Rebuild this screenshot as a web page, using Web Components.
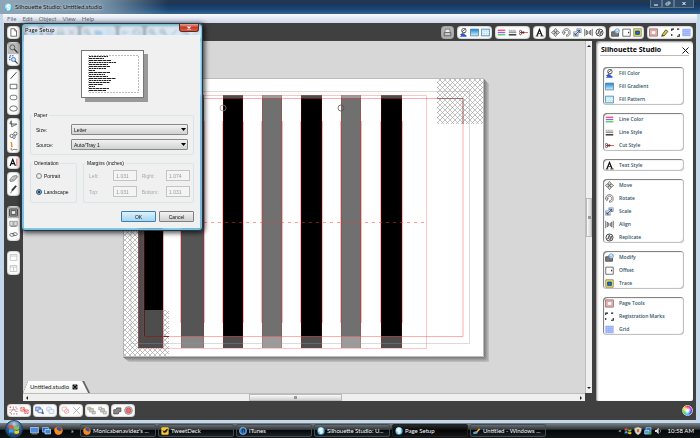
<!DOCTYPE html>
<html lang="en">
<head>
<meta charset="utf-8">
<title>Silhouette Studio: Untitled.studio</title>
<style>
body {
  margin: 0;
  min-height: 100vh;
  display: flex;
  flex-direction: column;
  font: 6px/8px Lato, "Open Sans", sans-serif;
  background: #000;
}
studio-window { flex: 1; }
</style>
</head>
<body>
<studio-window></studio-window>
<task-bar></task-bar>

<script>
const logo = '<circle cx="6" cy="6" r="5.5" fill="#4db4d8"/><circle cx="5.500" cy="4.500" r="4" fill="#b5e5f4"/><path d="M8 3C4 2 3 5 6 6s2 4-2 3" fill="none" stroke="#fff" stroke-width="1.800"/>';
const firefox = '<circle cx="6" cy="6" r="5.500" fill="#ee6a12"/><circle cx="6.500" cy="4.500" r="3.200" fill="#2d57a8"/><path d="M1 3c2-1 3 1 3 2 2 0 2 2 4 2s3-1 3-3c1 4-1 7-5 7.500S0 8 1 3z" fill="#f58b1d"/>';

const icons = {
  logo,
  firefox,
  page: '<path d="M2.500 1h5l2.500 3v7H2.500z" fill="#fff" stroke="#444"/><path d="M7.500 1v3H10" fill="none" stroke="#444" stroke-width=".7"/>',
  zoom: '<circle cx="4.500" cy="4.500" r="3.300" fill="#bbb" stroke="#444"/><path d="M7 7l4.500 4.500" stroke="#333" stroke-width="1.600"/>',
  zoomsel: '<path d="M1 7V1h6" fill="none" stroke="#35c" stroke-width="1.600" stroke-dasharray="2 1"/><circle cx="6" cy="6" r="2.800" fill="#cde" stroke="#26b"/><path d="M8 8l3.500 3.500" stroke="#444" stroke-width="1.500"/>',
  line: '<path d="M2 10.500L10 1.500" stroke="#333" stroke-width="1.200"/>',
  rect: '<path d="M1.500 3h9v6h-9z" fill="#fff" stroke="#444"/>',
  round: '<rect x="1.500" y="3" width="9" height="6" rx="2.500" fill="#fff" stroke="#555"/>',
  oval: '<ellipse cx="6" cy="6" rx="5" ry="3.500" fill="#fff" stroke="#444"/>',
  polygon: '<path d="M3 1l.5 8 7-3.500L1 5z" fill="#ddd" stroke="#444"/>',
  curve: '<circle cx="8.500" cy="3.500" r="2.200" fill="none" stroke="#444"/><circle cx="3.500" cy="6.500" r="2.200" fill="none" stroke="#444"/><path d="M5 8c0 3 3 3 3 0V5" fill="none" stroke="#444"/>',
  pencil: '<path d="M3 0l1 7" stroke="#f28a1c" stroke-width="2"/><path d="M3 8c-1 4 2 3 3 2s3 1 5 0" fill="none" stroke="#444"/>',
  textcursor: '<path d="M1.500 10.500L5 2l3.500 8.500M3 7.500h4" fill="none" stroke="#111" stroke-width="1.700"/><path d="M10.500 1v10" stroke="#e33"/>',
  eraser: '<path d="M1 8l4-5 5-1 1 2-4 5-5 1z" fill="#ddd" stroke="#666"/><path d="M4 8l4-5M1 8h5l5-5" fill="none" stroke="#777" stroke-width=".7"/>',
  knife: '<path d="M9.500 1L4 7.500" stroke="#333" stroke-width="2.500"/><path d="M4.500 7L2 11" stroke="#444"/>',
  screen: '<rect x=".7" y="1.200" width="10.600" height="9.600" rx="1" fill="#999" stroke="#333"/><path d="M3 3.500h6v5H3z" fill="#eee" stroke="#333"/>',
  book: '<path d="M1 3h4.500v6H1zM6.500 3H11v6H6.500z" fill="#ddd" stroke="#888"/><path d="M2 10h8" stroke="#777"/>',
  link: '<ellipse cx="4" cy="6.500" rx="3" ry="2" fill="none" stroke="#555"/><ellipse cx="8" cy="5.500" rx="3" ry="2" fill="none" stroke="#555"/>',
  panel: '<path d="M1.500 2h9v8h-9zM1.500 4h9" fill="#fff" stroke="#bbb"/>',
  split: '<path d="M1.500 2h9v8h-9zM1.500 4h9M6 4v6" fill="#fff" stroke="#bbb"/>',
  printer: '<path d="M2.500 6L3 1.500h6l.5 4.500" fill="#eee" stroke="#666"/><path d="M1.500 6h9v4.500h-9z" fill="#aaa" stroke="#555"/><path d="M3 8h6" stroke="#fff"/>',
  save: '<path d="M1.500 1.500h9v9h-9z" fill="#5578b8" stroke="#335"/><path d="M3.500 2h5v3h-5z" fill="#fff"/>',
  folder: '<path d="M1 3h4l1 1h5v6H1z" fill="#4d93d6"/>',
  redcut: '<path d="M2 2l8 8M10 2l-8 8" stroke="#c66" stroke-width="1.500"/>',
  undo: '<path d="M2 6h8M5 3L2 6l3 3" fill="none" stroke="#57a" stroke-width="1.300"/>',
  fillcolor: '<circle cx="6.500" cy="3.500" r="3" fill="#fff" stroke="#333"/><path d="M4 5l5-4M8 6L3 8" stroke="#333"/><path d="M1 8h6l3 2v1.500H1l2-2z" fill="#2459dd"/>',
  gradient: '<defs><linearGradient id="g" x2="0" y2="1"><stop stop-color="#1686d0"/><stop offset="1" stop-color="#d8f1ff"/></linearGradient></defs><path d="M.5 1.500h11v9H.5z" fill="url(#g)" stroke="#47799a"/>',
  pattern: '<path d="M.5 1.500h11v9H.5z" fill="#b9e7fa" stroke="#47799a"/><path d="M2 4h9M3 6h8M2 8.500h9" stroke="#fff" stroke-width="1.400" stroke-dasharray="1.500 1.500"/>',
  linecolor: '<path d="M1 3h10" stroke="#f0506a" stroke-width="1.800"/><path d="M1 6h10" stroke="#9b5cf0" stroke-width="1.800"/><path d="M1 9h10" stroke="#45d060" stroke-width="1.800"/>',
  linestyle: '<path d="M1 3h10" stroke="#555" stroke-dasharray="1.500 1"/><path d="M1 5.500h10" stroke="#555" stroke-width="1.300"/><path d="M1 9h10" stroke="#444" stroke-width="2.200"/>',
  cutstyle: '<path d="M4 6h8" stroke="#d33"/><circle cx="2" cy="4.500" r="1.400" fill="none" stroke="#633"/><circle cx="2" cy="7.500" r="1.400" fill="none" stroke="#633"/><path d="M3 5l4 2M3 7l4-2" stroke="#622" stroke-width="1.500"/>',
  text: '<path d="M2.500 10.500L6 2l3.500 8.500" fill="none" stroke="#111" stroke-width="1.700"/><path d="M4 7.500h4M1 10.700h3.500M7 10.700h4.500" stroke="#111"/>',
  move: '<path d="M6 .5l2 2.500v1.500L6 6 4 4.500V3zM6 11.500L4 9V7.500L6 6l2 1.500V9zM.5 6L3 4h1.500L6 6 4.500 8H3zM11.500 6L9 8H7.500L6 6l1.500-2H9z" fill="#ddd" stroke="#555" stroke-width=".9"/>',
  rotate: '<path d="M1 6c0-7 10-7 10 0 0 4-3 5-5 5V9c5-1 3-6 0-6-2 0-3 1-3 3l1.500-.5L2.500 9 0 5.500z" fill="#eee" stroke="#555" stroke-width=".9"/>',
  scale: '<path d="M.8 11V5H5V1h6v5H7v5z" fill="#dbe6fb" stroke="#6381b9" stroke-width=".8"/><path d="M2.500 9.500L9 3M5.500 3H9v3.500M2.500 6.500v3H6" fill="none" stroke="#333"/>',
  align: '<path d="M1 1v10M11 1v10" stroke="#444"/><path d="M3 3l2 1.500v3L3 9zM9 3L7 4.500v3L9 9z" fill="#ddd" stroke="#444"/>',
  replicate: '<circle cx="6" cy="6" r="4.700" fill="none" stroke="#444" stroke-width="1.300"/><path d="M3.500 8L6 2.500 5 7zM6 9l2.500-5L8 8z" fill="#fff" stroke="#333"/>',
  modify: '<path d="M.8 5H4l1-1.500 2 2.500h3v5H.8z" fill="#777" stroke="#444"/><circle cx="8.300" cy="4" r="3" fill="#dcecfc" stroke="#5c93cf"/><path d="M7 4l1 1 2-2" fill="none" stroke="#5c93cf"/>',
  offset: '<path d="M1 1.500h10v9.500H1z" fill="#fff" stroke="#444"/><path d="M8 4.500v3L10 6z" fill="#333"/>',
  trace: '<path d="M1 1h10v10H1z" fill="#ede34d" stroke="#777"/><path d="M3.500 4h5v4.500h-5z" fill="#1570e0" stroke="#235"/>',
  pagetools: '<path d="M.8 1.200h10.400v9.600H.8z" fill="#f7b9b9" stroke="#666"/><path d="M3 3.500h6v5H3z" fill="#fff" stroke="#e66" stroke-width=".7"/>',
  marker: '<path d="M2.500 9.500l5-7 3 2-5 6z" fill="#e4cf28" stroke="#333"/><path d="M2.500 9.500l-1 2 4-1z" fill="#222"/>',
  regmarks: '<path d="M1 4V1.500h3M8 1.500h3M1 10.500V8M8 11h3V8" fill="none" stroke="#222" stroke-width="1.500"/>',
  grid: '<path d="M.5 1h11v10H.5z" fill="#90aaf5"/><path d="M3.500 1v10M6.500 1v10M9.500 1v10M.5 3.500h11M.5 6h11M.5 8.500h11" stroke="#c3d1ff" stroke-width=".6"/>',
  group: '<path d="M1.500 1.500h9v9h-9z" fill="none" stroke="#e46a6a" stroke-width="1.500" stroke-dasharray="1.500 2"/><path d="M3 8l3-5 3 5M3 5h6" fill="none" stroke="#999"/>',
  ungroup: '<path d="M1 2h5v5H1zM6 5h5v5H6z" fill="#fbb" stroke="#e46a6a" stroke-width="1.500" stroke-dasharray="1.500 1"/><path d="M4 4l5 4" stroke="#c44"/>',
  duplicate: '<path d="M1 1.500h6v5H1z" fill="#c5d9f5" stroke="#3b62b5"/><rect x="4" y="4" width="6" height="5" rx="1" fill="#e3eefc" stroke="#3b62b5"/><path d="M10.500 7v4M8.500 9.500h3.500" stroke="#246"/>',
  copy: '<rect x="1" y="1.500" width="6" height="5" rx="1" fill="#eef4fd" stroke="#a9bfdd"/><rect x="4" y="4.500" width="6.500" height="5.500" rx="1" fill="#eef4fd" stroke="#a9bfdd"/>',
  remove: '<rect x="1.500" y="1.500" width="6" height="5" rx="1" fill="none" stroke="#e99"/><circle cx="7.500" cy="7" r="3" fill="#fee" stroke="#e99"/><path d="M5.500 9l4-4" stroke="#e99"/>',
  cross: '<path d="M1.500 1.500l9 9M10.500 1.500l-9 9" stroke="#aaa" stroke-width="1.200"/>',
  forward: '<path d="M1 1.500h4v3.500H1zM7 7h4v3.500H7z" fill="#ddd" stroke="#999"/><path d="M3.500 3.500h5v4.500h-5z" fill="#cdd6a5" stroke="#999"/>',
  backward: '<path d="M3.500 3.500h5v4.500h-5z" fill="#cdd6a5" stroke="#999"/><path d="M1 1.500h4v3.500H1zM7 7h4v3.500H7z" fill="#ddd" stroke="#999"/>',
  weld: '<path d="M1 5h3l1-2.500h5.500v5H8l-1 3H1z" fill="#888" stroke="#444"/>',
  target: '<circle cx="6" cy="6" r="5.200" fill="#b9bcbc" stroke="#888"/><circle cx="6" cy="6" r="3" fill="#f66" stroke="#d44"/>',
  desktop: '<path d="M.5 2h11v7H.5z" fill="#4e8bdc" stroke="#b8d3ef"/><path d="M2 10.500h8" stroke="#bbb"/>',
  windows: '<path d="M.5 2h8v6h-8z" fill="#2a62bb" stroke="#a7c8f0"/><path d="M4 4.500h7.500v6H4z" fill="#3f85e0" stroke="#d4e5fa"/>',
  bird: '<rect x=".5" y=".5" width="11" height="11" rx="1.500" fill="#f7c52c"/><path d="M2 5l3 1 4-3.500 1.500 1L8 8l-3.500 1z" fill="#222"/>',
  itunes: '<circle cx="6" cy="6" r="5.300" fill="#2f77c9" stroke="#adc7e2"/><path d="M5 8.500V3.500l3-.5v5" fill="none" stroke="#122" stroke-width="1.200"/>',
  writer: '<path d="M2 10L9 2l2 1.500L5 10z" fill="#f1a82d"/><path d="M0 8l5-2 2 3-6 2z" fill="#57a7e6"/>',
  flag: '<path d="M1 3c2-2 3-1 4.500 0v3C4 5 2.500 5 1 6z" fill="#f0522b"/><path d="M6.300 3.300C8 4.500 9.500 4 11 3v3c-2 1.500-3.500 1-4.700.3z" fill="#87c540"/><path d="M1 7c2-1.500 3-1 4.500 0v3C4 9 2.500 9 1 10z" fill="#36a5e8"/><path d="M6.300 7.300C8 8.500 9.500 8 11 7v3c-2 1.500-3.500 1-4.700.3z" fill="#fbc617"/>',
  shield: '<path d="M1 2l5-1.500L11 2c0 5-1 8-5 9.500C2 10 1 7 1 2z" fill="#ddd" stroke="#aaa"/><path d="M4 3h4v5H4z" fill="#e08c28"/><path d="M6 4v3" stroke="#333"/>',
  network: '<path d="M3 1h7.500v6H3z" fill="#2c6dc2" stroke="#b2d4f4"/><path d="M1 5h6.500v5.500H1z" fill="#3fa0e0" stroke="#d5eafa"/><circle cx="9" cy="9" r="2.500" fill="#3aa553"/>',
  sound: '<path d="M1.500 4.500h2L7 1v10L3.500 7.500h-2z" fill="#ddd"/><path d="M8.500 3.500c2 1.500 2 3.500 0 5" fill="none" stroke="#bbb"/>'
};

class ToolIcon extends HTMLElement {
  connectedCallback() {
    if (this.shadowRoot) return;
    this.attachShadow({ mode: 'open' }).innerHTML = `
      <style>
        :host { display: block; flex: none; width: var(--icon-size, 9px); height: var(--icon-size, 9px); }
        svg { display: block; width: 100%; height: 100%; }
      </style>
      <svg viewBox="0 0 12 12" aria-hidden="true">${icons[this.getAttribute('name')] || ''}</svg>`;
  }
}

// Rounded white strip of tool buttons, built from a space separated list of icons
class ToolGroup extends HTMLElement {
  connectedCallback() {
    if (this.shadowRoot) return;
    const tools = this.getAttribute('tools').split(' ');
    this.attachShadow({ mode: 'open' }).innerHTML = `
      <style>
        :host {
          display: flex;
          flex: none;
          padding: 1px;
          border-radius: 4px;
          background: #fff;
          box-shadow: inset 0 0 2px #777;
        }
        :host([vertical]) { flex-direction: column; }
        :host([pressed]) { background: #b5b5b5; }
        button {
          display: grid;
          place-items: center;
          width: 11px;
          height: 11px;
          padding: 0;
          border: 0;
          border-radius: 2px;
          background: none;
        }
        button.on { background: #bbb; box-shadow: 0 0 1px #555; }
      </style>
      ${tools.map(t => `<button type="button" aria-label="${t}" class="${t === this.getAttribute('active') ? 'on' : ''}"><tool-icon name="${t}"></tool-icon></button>`).join('')}`;
  }
}

class ScrollTrack extends HTMLElement {
  connectedCallback() {
    if (this.shadowRoot) return;
    this.attachShadow({ mode: 'open' }).innerHTML = `
      <style>
        :host {
          display: flex;
          align-items: center;
          justify-content: space-between;
          box-sizing: border-box;
          background: #efefef;
          border: 0 solid #bdbdbd;
          border-top-width: 1px;
        }
        :host([vertical]) { flex-direction: column; border-width: 0 0 0 1px; }
        svg { width: 4px; height: 4px; margin: 2px; flex: none; }
        :host([vertical]) svg { margin: 3px 1px; }
        .thumb {
          display: grid;
          place-items: center;
          box-sizing: border-box;
          width: 93px;
          height: 7px;
          margin-right: 3%;
          border: 1px solid #bbb;
          background: linear-gradient(#fafafa, #d2d2d2);
        }
        :host([vertical]) .thumb { width: 6px; height: 39px; margin: 0; background: linear-gradient(90deg, #fafafa, #d2d2d2); }
        .grip { width: 3px; height: 3px; background: #999; }
      </style>
      <svg viewBox="0 0 4 4"><path d="${this.hasAttribute('vertical') ? 'M2 1l2 2H0z' : 'M1 2l2-2v4z'}" fill="#222"/></svg>
      <div class="thumb"><div class="grip"></div></div>
      <svg viewBox="0 0 4 4"><path d="${this.hasAttribute('vertical') ? 'M2 3l2-2H0z' : 'M3 2L1 0v4z'}" fill="#222"/></svg>`;
  }
}

// x, width, fill, fill past the cut border
const stripes = [
  [181, 23, '#555', '#888'],
  [223, 20, '#000', '#4d4d4d'],
  [262, 20, '#707070', '#9b9b9b'],
  [301, 21, '#000', '#4d4d4d'],
  [341, 20, '#707070', '#9b9b9b'],
  [381, 21, '#000', '#4d4d4d']
];

class CanvasStage extends HTMLElement {
  connectedCallback() {
    if (this.shadowRoot) return;
    const bars = stripes.map(([x, w, fill, edge]) => `
      <rect x="${x}" y="95" width="${w}" height="253" fill="${edge}"/>
      <rect x="${x}" y="98" width="${w}" height="238" fill="${fill}"/>
      <path d="M${x - .5} 121v202M${x + w + .5} 121v202" stroke="#f33" stroke-opacity=".35"/>
      <path d="M${x + .5} 95v253M${x + w - .5} 95v253" stroke="#f00" stroke-opacity=".2"/>`).join('');
    this.attachShadow({ mode: 'open' }).innerHTML = `
      <style>
        :host { display: grid; place-items: center; background: #d7d7d7; }
        .art { grid-area: 1 / 1; width: 372px; height: 292px; }
        .tab {
          display: flex;
          align-items: center;
          gap: 3px;
          height: 12px;
          padding: 0 10px 0 7px;
          color: #222;
          background: linear-gradient(#fff, #f0f0ee);
          clip-path: polygon(0 100%, 5px 0, calc(100% - 6px) 0, 100% 100%);
        }
        .shade {
          grid-area: 1 / 1;
          place-self: end start;
          display: flex;
          padding-right: 2px;
          background: #666;
          clip-path: polygon(0 100%, 5px 0, calc(100% - 6px) 0, 100% 100%);
        }
        button { display: block; padding: 0; border: 0; background: none; width: 6px; height: 6px; }
        button svg { display: block; }
      </style>
      <svg class="art" viewBox="118 71 372 292" role="img" aria-label="Striped design on a letter page">
        <defs>
          <pattern id="hatch" width="5" height="5" patternUnits="userSpaceOnUse">
            <path d="M0 0l5 5M5 0L0 5" stroke="#999" stroke-width=".6"/>
          </pattern>
          <linearGradient id="right"><stop stop-color="#777"/><stop offset="1" stop-color="#c4c4c4"/></linearGradient>
          <linearGradient id="down" x2="0" y2="1"><stop stop-color="#777"/><stop offset="1" stop-color="#c4c4c4"/></linearGradient>
        </defs>
        <path d="M484 79l5 5v278l-5-5z" fill="url(#right)"/>
        <path d="M123 357h361l5 5H129z" fill="url(#down)"/>
        <path d="M123.500 78.500h360v278h-360z" fill="#fff" stroke="#bbb"/>
        <path d="M123 79h15v231h31v46h-46zM437 79h46v45h-46z" fill="url(#hatch)"/>
        <rect x="138" y="95" width="25" height="253" fill="#4d4d4d"/>
        <rect x="144" y="98" width="19" height="212" fill="#000"/>
        <path d="M144.500 310v26.500H169" fill="none" stroke="#222"/>
        ${bars}
        <path d="M131 91.500h338.500v252H131z" fill="none" stroke="#999" stroke-opacity=".35"/>
        <path d="M138.500 95.500h288v253h-288z" fill="none" stroke="#f55" stroke-opacity=".35"/>
        <path d="M144 98.500h319v238H144z" fill="none" stroke="#f33" stroke-opacity=".4"/>
        <path d="M437 98.500h26V124" fill="none" stroke="#755" stroke-opacity=".7"/>
        <path d="M163.500 230v118" stroke="#f55" stroke-opacity=".5"/>
        <path d="M204 222.500h222" stroke="#f33" stroke-opacity=".5" stroke-dasharray="3 4"/>
        <circle cx="223" cy="108" r="3" fill="none" stroke="#888" stroke-opacity=".7"/>
        <circle cx="341" cy="108" r="3" fill="none" stroke="#555" stroke-opacity=".8"/>
      </svg>
      <div class="shade">
        <div class="tab">Untitled.studio
          <button type="button" aria-label="Close tab"><svg viewBox="0 0 6 6"><rect width="6" height="6" rx="2" fill="#999"/><path d="M1 1l4 4M5 1L1 5" stroke="#111" stroke-width="1.300"/></svg></button>
        </div>
      </div>`;
  }
}

class PanelGroup extends HTMLElement {
  connectedCallback() {
    if (this.shadowRoot) return;
    this.attachShadow({ mode: 'open' }).innerHTML = `
      <style>
        :host {
          display: flex;
          flex-direction: column;
          gap: 1px;
          border-radius: 4px;
          box-shadow: inset 1px 1px 1px #777, inset -1px -1px 1px #bbb;
        }
      </style>
      <slot></slot>`;
  }
}

class PanelItem extends HTMLElement {
  connectedCallback() {
    if (this.shadowRoot) return;
    this.attachShadow({ mode: 'open' }).innerHTML = `
      <style>
        :host { display: block; --icon-size: 9px; }
        button {
          display: flex;
          align-items: center;
          gap: 5px;
          width: 100%;
          height: 12px;
          padding: 0 2px;
          border: 0;
          background: none;
          font: 600 5px/8px "Open Sans", "Noto Sans", sans-serif;
          color: #315468;
          text-align: left;
        }
      </style>
      <button type="button"><tool-icon name="${this.getAttribute('icon')}"></tool-icon><slot></slot></button>`;
  }
}

class SidePanel extends HTMLElement {
  connectedCallback() {
    if (this.shadowRoot) return;
    this.attachShadow({ mode: 'open' }).innerHTML = `
      <style>
        :host {
          display: block;
          box-sizing: border-box;
          padding: 4px 4px 0;
          border-radius: 4px 4px 2px 2px;
          background: #fff;
          box-shadow: inset 1px 1px 2px #888;
        }
        header {
          display: flex;
          align-items: center;
          justify-content: space-between;
          height: 10px;
          border-bottom: 1px solid #bbb;
        }
        h2 { margin: 0; padding-left: 1px; font: 700 7px/10px "Noto Sans", sans-serif; color: #000; }
        header button { display: block; padding: 0; border: 0; background: none; width: 7px; height: 7px; }
        header svg { display: block; }
        .groups { display: flex; flex-direction: column; gap: 8px; margin: 11px 5px 0 3px; }
      </style>
      <header>
        <h2>Silhouette Studio</h2>
        <button type="button" aria-label="Close panel"><svg viewBox="0 0 7 7"><path d="M.5.5l6 6M6.500.5l-6 6" stroke="#111"/></svg></button>
      </header>
      <div class="groups">
        <panel-group>
          <panel-item icon="fillcolor">Fill Color</panel-item>
          <panel-item icon="gradient">Fill Gradient</panel-item>
          <panel-item icon="pattern">Fill Pattern</panel-item>
        </panel-group>
        <panel-group>
          <panel-item icon="linecolor">Line Color</panel-item>
          <panel-item icon="linestyle">Line Style</panel-item>
          <panel-item icon="cutstyle">Cut Style</panel-item>
        </panel-group>
        <panel-group>
          <panel-item icon="text">Text Style</panel-item>
        </panel-group>
        <panel-group>
          <panel-item icon="move">Move</panel-item>
          <panel-item icon="rotate">Rotate</panel-item>
          <panel-item icon="scale">Scale</panel-item>
          <panel-item icon="align">Align</panel-item>
          <panel-item icon="replicate">Replicate</panel-item>
        </panel-group>
        <panel-group>
          <panel-item icon="modify">Modify</panel-item>
          <panel-item icon="offset">Offset</panel-item>
          <panel-item icon="trace">Trace</panel-item>
        </panel-group>
        <panel-group>
          <panel-item icon="pagetools">Page Tools</panel-item>
          <panel-item icon="regmarks">Registration Marks</panel-item>
          <panel-item icon="grid">Grid</panel-item>
        </panel-group>
      </div>`;
  }
}

class PageSetup extends HTMLElement {
  connectedCallback() {
    if (this.shadowRoot) return;
    const lines = [14, 10, 17, 22, 14, 16, 12, 1, 16, 11, 14, 22, 17, 16, 9, 1, 15, 12];
    const text = lines.map((w, i) => `<path d="M7 ${5.500 + i * 2}h${w + 5}" stroke-dasharray="${2 + i % 3} .5"/>`).join('');
    this.attachShadow({ mode: 'open' }).innerHTML = `
      <style>
        :host {
          display: block;
          box-sizing: border-box;
          width: 182px;
          padding: 0 3px 3px;
          border: 1px solid #1d3a4c;
          border-radius: 4px;
          background: linear-gradient(rgba(205, 222, 236, .7), rgba(150, 190, 218, .85));
          backdrop-filter: blur(1px);
          box-shadow: inset 0 0 1px 1px #67c4e6, 1px 1px 5px 1px rgba(0, 0, 0, .7);
          color: #111;
          font: 5px/8px "Liberation Sans", Arial, sans-serif;
        }
        header { display: flex; justify-content: space-between; height: 12px; }
        h1 { margin: 0; font: 6px/12px Lato, sans-serif; text-shadow: 0 0 2px #fff, 0 0 3px #fff; }
        .close {
          width: 20px;
          height: 8px;
          padding: 0;
          border: 1px solid #5c2a22;
          border-top: 0;
          border-radius: 0 0 3px 3px;
          background: linear-gradient(#e6a194, #c23c22 50%, #d8604a);
        }
        .close svg { display: block; margin: auto; width: 6px; height: 6px; }
        form { display: flex; flex-direction: column; padding: 14px 5px 5px; background: #f0f0f0; box-shadow: 0 0 0 1px #e8f2fa; }
        .preview {
          align-self: center;
          box-sizing: border-box;
          width: 63px;
          height: 48px;
          margin-bottom: 13px;
          border: 1px solid #777;
          background: #fff;
          box-shadow: 4px 4px #999;
        }
        .preview svg { display: block; }
        fieldset { min-width: 0; margin: 0; border: 1px solid #dae5ea; border-radius: 2px; padding: 5px 5px 4px; display: grid; gap: 4px; }
        legend { padding: 0 2px; margin-left: -4px; height: 8px; }
        .row { display: grid; grid-template-columns: 35px 1fr; align-items: center; }
        .pick { display: grid; align-items: center; }
        .pick > * { grid-area: 1 / 1; }
        .pick svg { justify-self: end; margin-right: 2px; width: 5px; height: 3px; pointer-events: none; }
        select {
          appearance: none;
          width: 100%;
          height: 11px;
          padding: 0 2px;
          border: 1px solid #888;
          border-radius: 1px;
          background: linear-gradient(#f2f2f2, #d2d2d2);
          color: #111;
          font: inherit;
        }
        .pair { display: grid; grid-template-columns: 47px 1fr; gap: 6px; margin-top: 4px; }
        .pair fieldset { padding: 3px 5px 5px; gap: 5px; }
        .radio { display: flex; align-items: center; gap: 2px; height: 11px; }
        input[type=radio] {
          appearance: none;
          box-sizing: border-box;
          width: 6px;
          height: 6px;
          margin: 0;
          border: 1px solid #8e8f8f;
          border-radius: 50%;
          background: radial-gradient(#fff, #ccc);
        }
        input[type=radio]:checked { border-color: #456; background: radial-gradient(#12457d 35%, #8cc3ec 60%); }
        .pair .margins { grid-template-columns: 20px 24px 20px 24px; column-gap: 1px; justify-content: space-between; align-items: center; padding: 3px 3px 5px 5px; color: #aaa; }
        .margins legend { color: #111; }
        input[type=text] {
          box-sizing: border-box;
          width: 100%;
          height: 11px;
          padding: 0 2px;
          border: 1px solid #c4c4c4;
          background: #f4f4f4;
          color: #999;
          font: inherit;
        }
        footer { display: flex; justify-content: flex-end; gap: 3px; margin-top: 8px; }
        footer button {
          width: 35px;
          height: 11px;
          padding: 0;
          border: 1px solid #808080;
          border-radius: 1px;
          background: linear-gradient(#f4f4f4, #d0d0d0);
          color: #111;
          font: inherit;
        }
        footer .ok { border-color: #3c7fb1; background: linear-gradient(#def2fc, #a2d6f3); }
      </style>
      <header>
        <h1>Page Setup</h1>
        <button class="close" type="button" aria-label="Close"><svg viewBox="0 0 6 6"><path d="M1.500 1.500l3 3M4.500 1.500l-3 3" stroke="#fff" stroke-width="1.200"/></svg></button>
      </header>
      <form>
        <div class="preview">
          <svg viewBox="0 0 61 46" width="61" height="46">
            <path d="M6.500 4.500h50v37h-50z" fill="none" stroke="#777" stroke-dasharray="1 2"/>
            <g stroke="#222" stroke-width="1">${text}</g>
          </svg>
        </div>
        <fieldset>
          <legend>Paper</legend>
          <div class="row"><label for="size">Size:</label><div class="pick"><select id="size"><option>Letter</option></select><svg viewBox="0 0 5 3"><path d="M0 0h5L2.500 3z"/></svg></div></div>
          <div class="row"><label for="source">Source:</label><div class="pick"><select id="source"><option>Auto/Tray 1</option></select><svg viewBox="0 0 5 3"><path d="M0 0h5L2.500 3z"/></svg></div></div>
        </fieldset>
        <div class="pair">
          <fieldset>
            <legend>Orientation</legend>
            <label class="radio"><input type="radio" name="orientation">Portrait</label>
            <label class="radio"><input type="radio" name="orientation" checked>Landscape</label>
          </fieldset>
          <fieldset class="margins">
            <legend>Margins (inches)</legend>
            <label for="left">Left:</label><input id="left" type="text" value="1.031" disabled>
            <label for="right">Right:</label><input id="right" type="text" value="1.074" disabled>
            <label for="top">Top:</label><input id="top" type="text" value="1.031" disabled>
            <label for="bottom">Bottom:</label><input id="bottom" type="text" value="1.031" disabled>
          </fieldset>
        </div>
        <footer><button class="ok" type="button">OK</button><button type="button">Cancel</button></footer>
      </form>`;
  }
}

class StudioWindow extends HTMLElement {
  connectedCallback() {
    if (this.shadowRoot) return;
    this.attachShadow({ mode: 'open' }).innerHTML = `
      <style>
        :host {
          display: flex;
          flex-direction: column;
          position: relative;
          background: #c3d8ea;
        }
        .title {
          display: flex;
          align-items: center;
          gap: 2px;
          height: 14px;
          padding: 0 6px 0 4px;
          color: #111;
          background: linear-gradient(90deg, #8fa5b5, #7d98ad 14%, rgba(60, 100, 140, 0) 24%), linear-gradient(#27384c, #17375c 30%, #1b4a78 70%, #376390);
        }
        .title span { flex: 1; text-shadow: 0 0 3px #fff; }
        .controls { display: flex; align-self: flex-start; }
        .controls button {
          display: grid;
          place-items: center;
          width: 12px;
          height: 8px;
          padding: 0;
          border: 1px solid #60758a;
          border-top: 0;
          background: #2e4d6c;
        }
        .controls button:last-child { width: 20px; }
        .controls svg { width: 6px; height: 5px; }
        nav {
          display: flex;
          align-items: center;
          gap: 6px;
          height: 9px;
          margin: 0 3px;
          padding-left: 4px;
          background: linear-gradient(#f8fafd, #cfd8ea);
        }
        nav a { color: #6c7078; text-decoration: none; }
        .body {
          flex: 1;
          display: grid;
          grid-template-columns: 19px 1fr;
          grid-template-rows: 1fr 19px;
          margin: 0 4px 3px;
          background: #404040;
        }
        .tools { display: flex; flex-direction: column; align-items: flex-start; gap: 3px; padding: 3px 3px 0; }
        .tools .apart { margin-top: 7px; }
        .work { display: grid; grid-template-rows: 18px 1fr; }
        .bar { display: flex; align-items: center; gap: 3px; padding: 0 3px 0 4px; }
        .bar .end { display: flex; gap: 3px; margin-left: auto; }
        .main { display: grid; grid-template-columns: 1fr 97px; column-gap: 4px; padding-right: 3px; }
        .view { display: grid; grid-template-columns: 1fr 7px; grid-template-rows: 1fr 8px; }
        .status {
          grid-column: 1 / -1;
          display: flex;
          align-items: center;
          gap: 2px;
          padding: 0 3px;
        }
        .wheel {
          width: 11px;
          height: 11px;
          margin-left: auto;
          padding: 0;
          border: 1px solid #ccc;
          border-radius: 50%;
          background: radial-gradient(#fff 15%, transparent 60%), conic-gradient(#f33, #b3e, #33f, #3cf, #3d4, #fe3, #f33);
        }
        page-setup { position: absolute; left: 21px; top: 23px; }
      </style>
      <div class="title">
        <tool-icon name="logo"></tool-icon><span>Silhouette Studio: Untitled.studio</span>
        <div class="controls">
          <button type="button" aria-label="Minimize"><svg viewBox="0 0 6 5"><path d="M1 4h4" stroke="#fff"/></svg></button>
          <button type="button" aria-label="Restore"><svg viewBox="0 0 6 5"><path d="M1 2h3v2H1zM2.500 1H5v2" fill="none" stroke="#ddd" stroke-width=".8"/></svg></button>
          <button type="button" aria-label="Close"><svg viewBox="0 0 6 5"><path d="M1.500 1l3 3M4.500 1l-3 3" stroke="#fff"/></svg></button>
        </div>
      </div>
      <nav><a href="#">File</a><a href="#">Edit</a><a href="#">Object</a><a href="#">View</a><a href="#">Help</a></nav>
      <div class="body">
        <div class="tools">
          <tool-group vertical tools="page"></tool-group>
          <tool-group vertical tools="zoom zoomsel" active="zoom"></tool-group>
          <tool-group vertical tools="line rect round oval"></tool-group>
          <tool-group vertical tools="polygon curve pencil"></tool-group>
          <tool-group vertical tools="textcursor"></tool-group>
          <tool-group vertical tools="eraser knife"></tool-group>
          <tool-group class="apart" vertical tools="screen book link" active="screen"></tool-group>
          <tool-group class="apart" vertical tools="panel split"></tool-group>
        </div>
        <div class="work">
          <div class="bar">
            <tool-group tools="folder"></tool-group>
            <tool-group tools="save printer redcut"></tool-group>
            <tool-group tools="zoom folder copy"></tool-group>
            <tool-group tools="undo rotate"></tool-group>
            <tool-group tools="zoom zoom line zoom line"></tool-group>
            <div class="end">
              <tool-group pressed tools="printer"></tool-group>
              <tool-group tools="fillcolor gradient pattern"></tool-group>
              <tool-group tools="linecolor linestyle cutstyle"></tool-group>
              <tool-group tools="text"></tool-group>
              <tool-group tools="move rotate scale align replicate"></tool-group>
              <tool-group tools="modify offset trace"></tool-group>
              <tool-group tools="pagetools marker regmarks grid"></tool-group>
            </div>
          </div>
          <div class="main">
            <div class="view">
              <canvas-stage></canvas-stage>
              <scroll-track vertical></scroll-track>
              <scroll-track></scroll-track>
            </div>
            <side-panel></side-panel>
          </div>
        </div>
        <div class="status">
          <tool-group tools="group ungroup"></tool-group>
          <tool-group tools="duplicate copy"></tool-group>
          <tool-group tools="remove cross"></tool-group>
          <tool-group tools="forward backward"></tool-group>
          <tool-group tools="weld target"></tool-group>
          <button class="wheel" type="button" aria-label="Color wheel"></button>
        </div>
      </div>
      <page-setup></page-setup>`;
  }
}

class TaskButton extends HTMLElement {
  connectedCallback() {
    if (this.shadowRoot) return;
    this.attachShadow({ mode: 'open' }).innerHTML = `
      <style>
        :host { display: block; flex: 0 1 76px; min-width: 0; --icon-size: 8px; }
        button {
          display: flex;
          align-items: center;
          gap: 2px;
          width: 100%;
          height: 13px;
          padding: 0 2px;
          border: 1px solid #444b50;
          border-radius: 2px;
          background: linear-gradient(#666c70, #2b3135 45%, #05090c 50%, #1c2226);
          color: #fff;
          font: inherit;
          white-space: nowrap;
        }
        :host([active]) button { background: linear-gradient(#26292b, #050505 50%, #151515); border-color: #222; }
      </style>
      <button type="button"><tool-icon name="${this.getAttribute('icon')}"></tool-icon><slot></slot></button>`;
  }
}

class TaskBar extends HTMLElement {
  connectedCallback() {
    if (this.shadowRoot) return;
    this.attachShadow({ mode: 'open' }).innerHTML = `
      <style>
        :host {
          display: flex;
          align-items: center;
          height: 15px;
          padding: 0 6px 0 5px;
          background: linear-gradient(#7c8489, #33393d 40%, #05080a 50%, #101518);
          color: #fff;
          --icon-size: 9px;
        }
        .start {
          display: grid;
          place-items: center;
          width: 18px;
          height: 18px;
          margin-top: -3px;
          padding: 0;
          border: 1px solid #1d3f5e;
          border-radius: 50%;
          background: radial-gradient(circle at 50% 20%, #b7d0e2, #2d618e 50%, #0f2f50);
          z-index: 1;
          --icon-size: 12px;
        }
        .quick { display: flex; align-items: center; gap: 3px; width: 50px; margin-left: 7px; }
        .quick span { margin-left: 5px; }
        .windows { flex: 1; display: flex; gap: 2px; min-width: 0; }
        .tray { display: flex; align-items: center; gap: 2px; --icon-size: 8px; }
        .tray time { margin-left: 4px; }
      </style>
      <button class="start" type="button" aria-label="Start"><tool-icon name="flag"></tool-icon></button>
      <div class="quick">
        <tool-icon name="desktop"></tool-icon><tool-icon name="windows"></tool-icon><tool-icon name="firefox"></tool-icon><span>»</span>
      </div>
      <div class="windows">
        <task-button icon="firefox">Monicabenavidez's ...</task-button>
        <task-button icon="bird">TweetDeck</task-button>
        <task-button icon="itunes">iTunes</task-button>
        <task-button icon="logo">Silhouette Studio: U...</task-button>
        <task-button icon="logo" active>Page Setup</task-button>
        <task-button icon="writer">Untitled - Windows ...</task-button>
      </div>
      <div class="tray">
        <span>&lt;</span><tool-icon name="flag"></tool-icon><tool-icon name="shield"></tool-icon>
        <tool-icon name="network"></tool-icon><tool-icon name="sound"></tool-icon><time>10:58 AM</time>
      </div>`;
  }
}

customElements.define('tool-icon', ToolIcon);
customElements.define('tool-group', ToolGroup);
customElements.define('scroll-track', ScrollTrack);
customElements.define('canvas-stage', CanvasStage);
customElements.define('panel-item', PanelItem);
customElements.define('panel-group', PanelGroup);
customElements.define('side-panel', SidePanel);
customElements.define('page-setup', PageSetup);
customElements.define('studio-window', StudioWindow);
customElements.define('task-button', TaskButton);
customElements.define('task-bar', TaskBar);
</script>
</body>
</html>
